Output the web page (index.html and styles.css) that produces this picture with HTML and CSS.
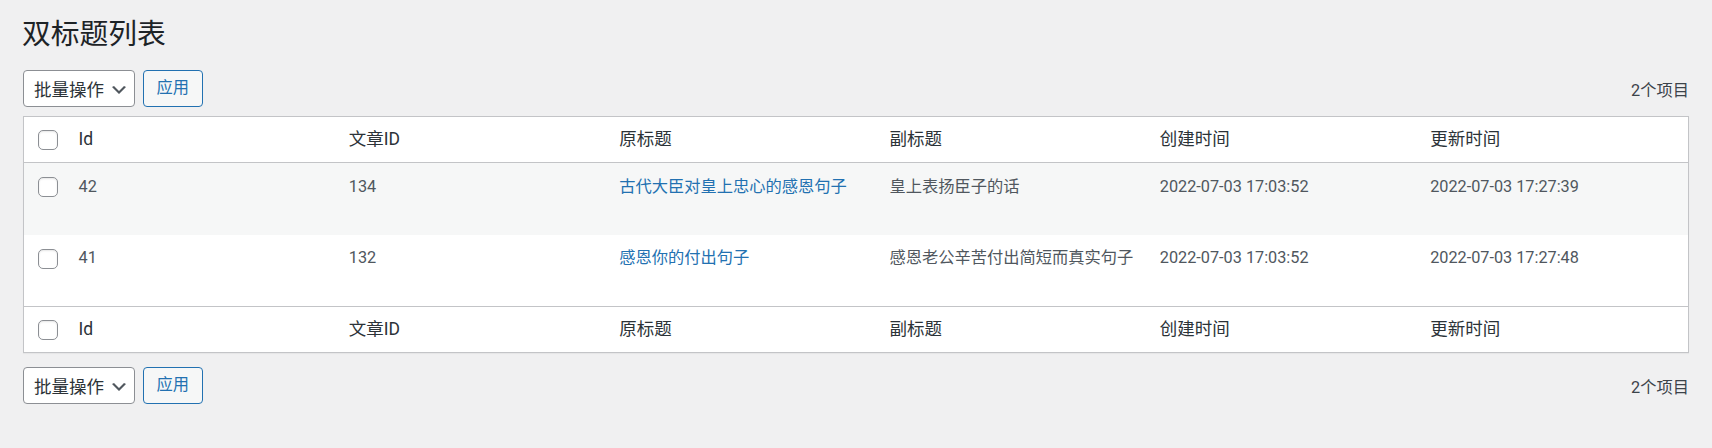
FILE: index.html
```html
<!DOCTYPE html>
<html lang="zh-CN">
<head>
<meta charset="utf-8">
<title>双标题列表</title>
<link rel="stylesheet" href="styles.css">
</head>
<body>
<div class="wrap">
  <h1 class="page-title">双标题列表</h1>

  <div class="tablenav top">
    <div class="bulk">
      <div class="select"><span>批量操作</span><svg viewBox="0 0 20 20" aria-hidden="true"><path d="M5 6l5 5 5-5 2 1-7 7-7-7 2-1z"/></svg></div>
      <button class="apply" type="button">应用</button>
    </div>
    <span class="count">2个项目</span>
  </div>

  <table class="list">
    <thead>
      <tr>
        <th class="check"><input class="checkbox" type="checkbox"></th>
        <th>Id</th>
        <th>文章ID</th>
        <th>原标题</th>
        <th>副标题</th>
        <th>创建时间</th>
        <th>更新时间</th>
      </tr>
    </thead>
    <tbody>
      <tr>
        <td class="check"><input class="checkbox" type="checkbox"></td>
        <td>42</td>
        <td>134</td>
        <td><a href="#">古代大臣对皇上忠心的感恩句子</a></td>
        <td>皇上表扬臣子的话</td>
        <td>2022-07-03 17:03:52</td>
        <td>2022-07-03 17:27:39</td>
      </tr>
      <tr>
        <td class="check"><input class="checkbox" type="checkbox"></td>
        <td>41</td>
        <td>132</td>
        <td><a href="#">感恩你的付出句子</a></td>
        <td>感恩老公辛苦付出简短而真实句子</td>
        <td>2022-07-03 17:03:52</td>
        <td>2022-07-03 17:27:48</td>
      </tr>
    </tbody>
    <tfoot>
      <tr>
        <th class="check"><input class="checkbox" type="checkbox"></th>
        <th>Id</th>
        <th>文章ID</th>
        <th>原标题</th>
        <th>副标题</th>
        <th>创建时间</th>
        <th>更新时间</th>
      </tr>
    </tfoot>
  </table>

  <div class="tablenav bottom">
    <div class="bulk">
      <div class="select"><span>批量操作</span><svg viewBox="0 0 20 20" aria-hidden="true"><path d="M5 6l5 5 5-5 2 1-7 7-7-7 2-1z"/></svg></div>
      <button class="apply" type="button">应用</button>
    </div>
    <span class="count">2个项目</span>
  </div>
</div>
</body>
</html>
```

FILE: styles.css
```css
* {
  box-sizing: border-box;
}

html,
body {
  margin: 0;
}

body {
  background: #f0f0f1;
  color: #3c434a;
  font-family: Roboto, "Noto Sans CJK SC", sans-serif;
  font-size: 16.25px;
}

.wrap {
  padding: 16px 23px 0;
}

.page-title {
  margin: 0 0 0 -1px;
  font-size: 28.75px;
  font-weight: 400;
  line-height: 37px;
  color: #1d2327;
}

.tablenav {
  display: flex;
  justify-content: space-between;
  align-items: center;
  height: 37px;
}

.tablenav.top {
  margin: 17px 0 9px;
}

.tablenav.bottom {
  margin-top: 14px;
}

.bulk {
  display: flex;
  gap: 8px;
}

.select {
  display: flex;
  align-items: center;
  gap: 5px;
  height: 37px;
  padding: 0 5px 0 10px;
  border: 1px solid #8c8f94;
  border-radius: 4px;
  background: #fff;
  color: #2c3338;
  font-size: 17.5px;
}

.select svg {
  width: 20px;
  height: 20px;
  margin-top: 3px;
  fill: #50575e;
}

.apply {
  height: 37px;
  padding: 0 12.5px;
  border: 1px solid #2271b1;
  border-radius: 4px;
  background: #f6f7f7;
  color: #2271b1;
  font-family: inherit;
  font-size: 16.25px;
  line-height: 1;
}

.count {
  color: #3c434a;
  font-size: 16.25px;
}

.list {
  width: 100%;
  table-layout: fixed;
  border-spacing: 0;
  border: 1px solid #c3c4c7;
  background: #fff;
  box-shadow: 0 1px 1px rgba(0, 0, 0, 0.04);
}

.list th {
  font-weight: 400;
  text-align: left;
  font-size: 17.5px;
  line-height: 23px;
  color: #2c3338;
  padding: 11px 12.5px;
  vertical-align: middle;
}

.list thead th {
  border-bottom: 1px solid #c3c4c7;
}

.list tfoot th {
  border-top: 1px solid #c3c4c7;
}

.list .check {
  width: 42px;
  padding: 0 0 0 14px;
}

.list td {
  vertical-align: top;
  padding: 11.5px 12.5px 0;
  font-size: 16.25px;
  line-height: 24.4px;
  color: #50575e;
}

.list td.check {
  padding: 14px 0 0 14px;
}

.list tbody tr {
  height: 71.5px;
}

.list tbody tr:nth-child(odd) {
  background: #f6f7f7;
}

.list a {
  color: #2271b1;
  text-decoration: none;
}

.checkbox {
  appearance: none;
  -webkit-appearance: none;
  display: block;
  width: 20px;
  height: 20px;
  margin: 0;
  border: 1px solid #8c8f94;
  border-radius: 5px;
  background: #fff;
  box-shadow: inset 0 1px 2px rgba(0, 0, 0, 0.1);
}
```
